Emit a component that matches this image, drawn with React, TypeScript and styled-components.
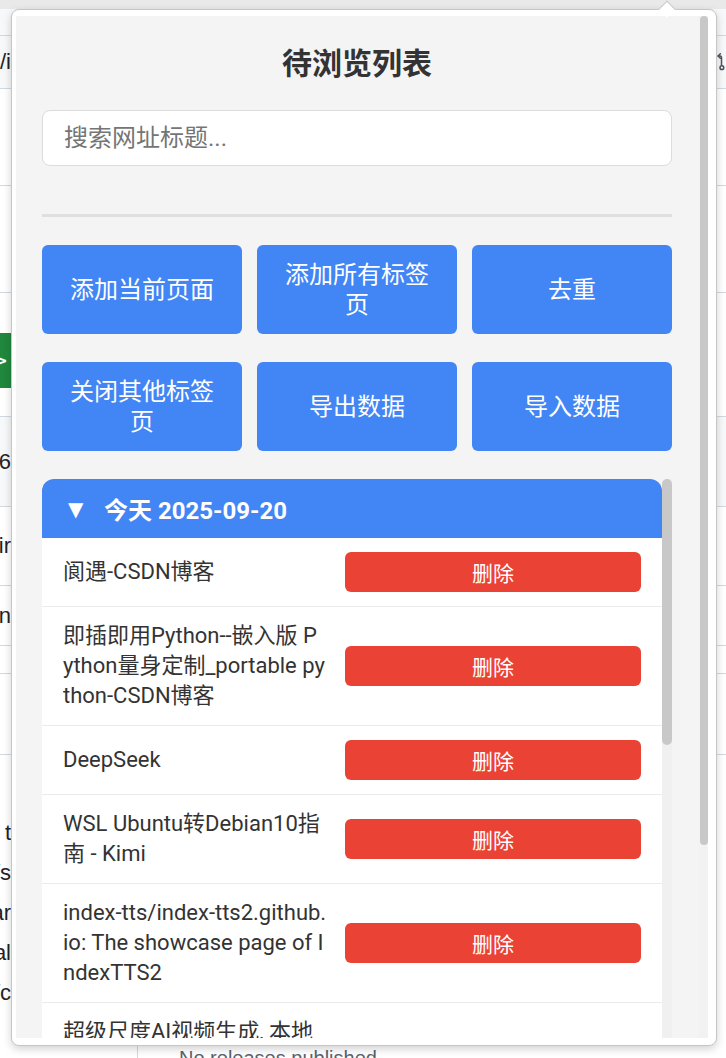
import React from "react";
import styled, { createGlobalStyle } from "styled-components";

const GlobalStyle = createGlobalStyle`
  *, *::before, *::after { box-sizing: border-box; }
  html, body { margin: 0; padding: 0; }
  body {
    background: #ffffff;
    font-family: Roboto, "Noto Sans CJK SC", sans-serif;
    overflow: hidden;
  }
`;

const Screen = styled.div`
  position: relative;
  width: 726px;
  height: 1058px;
  overflow: hidden;
  background: #ffffff;
`;

/* ---------- background web page (only its edges show) ---------- */
const BgPage = styled.div`
  display: flex;
  flex-direction: column;
  width: 100%;
  height: 100%;
`;

const Band = styled.div<{ $h: number; $bg?: string; $line?: boolean }>`
  flex: 0 0 ${(p) => p.$h}px;
  display: flex;
  align-items: stretch;
  justify-content: space-between;
  background: ${(p) => p.$bg ?? "#ffffff"};
  border-bottom: ${(p) => (p.$line ? "1px solid #d1d9e0" : "0")};
`;

const EdgeText = styled.div`
  width: 11px;
  display: flex;
  align-items: center;
  justify-content: flex-end;
  overflow: hidden;
  white-space: nowrap;
  font-family: "Liberation Sans", Arial, sans-serif;
  font-size: 22px;
  color: #1f2328;
`;

const GreenTab = styled.div`
  width: 11px;
  display: flex;
  align-items: center;
  overflow: hidden;
  background: #1f883d;
  color: #ffffff;
  font-family: "DejaVu Sans", sans-serif;
  font-weight: 700;
  font-size: 15px;
  span { margin-left: -5px; }
`;

const EdgeIcon = styled.div`
  width: 9px;
  display: flex;
  align-items: center;
  overflow: hidden;
`;

const ParaBand = styled.div`
  flex: 0 0 290px;
  display: flex;
  flex-direction: column;
  padding-top: 58px;
`;

const ParaLine = styled(EdgeText)`
  height: 40px;
  flex: 0 0 40px;
`;

const FootBand = styled.div`
  flex: 0 0 13px;
  display: flex;
`;

const FootSide = styled.div`
  width: 138px;
  border-right: 1px solid #d1d9e0;
`;

const FootText = styled.div`
  padding: 3px 0 0 41px;
  font-family: "Liberation Sans", Arial, sans-serif;
  font-size: 20px;
  line-height: 20px;
  color: #59636e;
  white-space: nowrap;
`;

/* ---------- extension popup ---------- */
const Popup = styled.div`
  position: absolute;
  left: 11px;
  top: 9px;
  width: 706px;
  height: 1037px;
  display: flex;
  padding: 6px 8px 7px 4px;
  background: #ffffff;
  border: 1px solid #c6c6c6;
  border-radius: 8px;
  box-shadow: 0 3px 8px rgba(0, 0, 0, 0.18);
`;

const Arrow = styled.div`
  position: absolute;
  left: 661px;
  top: 3px;
  width: 12px;
  height: 12px;
  background: #ffffff;
  border-left: 1px solid #c6c6c6;
  border-top: 1px solid #c6c6c6;
  transform: rotate(45deg);
`;

const Viewport = styled.div`
  flex: 1;
  display: flex;
  min-width: 0;
  background: #f4f4f4;
  overflow: hidden;
`;

const Main = styled.main`
  flex: 1;
  min-width: 0;
  padding: 24px 27px 0 26px;
  overflow: hidden;
`;

const ScrollTrack = styled.div<{ $w: number; $bg: string }>`
  flex: 0 0 ${(p) => p.$w}px;
  display: flex;
  justify-content: flex-end;
  align-items: flex-start;
  background: ${(p) => p.$bg};
`;

const ScrollThumb = styled.div<{ $w: number; $h: number }>`
  width: ${(p) => p.$w}px;
  height: ${(p) => p.$h}px;
  border-radius: ${(p) => p.$w / 2}px;
  background: #c8c8c8;
`;

const Title = styled.h1`
  margin: 0;
  font-size: 30px;
  line-height: 48px;
  font-weight: 700;
  text-align: center;
  color: #333333;
`;

const SearchInput = styled.input`
  display: block;
  width: 100%;
  height: 56px;
  margin-top: 22px;
  padding: 0 21px;
  border: 1px solid #dcdcdc;
  border-radius: 8px;
  background: #ffffff;
  font-family: inherit;
  font-size: 24px;
  color: #333333;
  outline: none;
  &::placeholder {
    color: #757575;
  }
`;

const Divider = styled.hr`
  margin: 48px 0 0;
  border: 0;
  height: 3px;
  background: #dfdfdf;
`;

const ActionGrid = styled.div`
  display: grid;
  grid-template-columns: repeat(3, 1fr);
  column-gap: 15px;
  row-gap: 28px;
  margin-top: 28px;
`;

const ActionButton = styled.button`
  min-height: 89px;
  padding: 0 20px;
  border: 0;
  border-radius: 6px;
  background: #4285f4;
  color: #ffffff;
  font-family: inherit;
  font-size: 24px;
  line-height: 30px;
  cursor: pointer;
`;

const ListSection = styled.section`
  display: flex;
  margin-top: 28px;
`;

const ListBody = styled.div`
  flex: 1;
  min-width: 0;
`;

const GroupHeader = styled.div`
  height: 59px;
  display: flex;
  align-items: center;
  padding-left: 26px;
  background: #4285f4;
  color: #ffffff;
  border-radius: 12px 12px 0 0;
  font-weight: 700;
  font-size: 24px;
`;

const Caret = styled.span`
  width: 36px;
  font-family: "DejaVu Sans", sans-serif;
  font-size: 20px;
  font-weight: 400;
`;

const Item = styled.div`
  display: flex;
  align-items: center;
  padding: 14px 21px;
  background: #ffffff;
  border-bottom: 1px solid #ebebeb;
`;

const ItemTitle = styled.div`
  flex: 0 0 270px;
  margin-right: 12px;
  font-size: 22px;
  line-height: 30px;
  color: #333333;
  white-space: pre;
  overflow: hidden;
`;

const DeleteButton = styled.button`
  flex: 1;
  height: 40px;
  border: 0;
  border-radius: 6px;
  background: #ea4335;
  color: #ffffff;
  font-family: inherit;
  font-size: 21px;
  cursor: pointer;
`;

const actions = [
  "添加当前页面",
  "添加所有标签页",
  "去重",
  "关闭其他标签页",
  "导出数据",
  "导入数据",
];

const items = [
  "阆遇-CSDN博客",
  "即插即用Python--嵌入版 P\nython量身定制_portable py\nthon-CSDN博客",
  "DeepSeek",
  "WSL Ubuntu转Debian10指\n南 - Kimi",
  "index-tts/index-tts2.github.\nio: The showcase page of I\nndexTTS2",
  "超级尺度AI视频生成, 本地\n部署一键整合包下载-CSD\nN博客",
];

const paraEnds = ["t", "/s", "ar", "al", "/c"];

const ForkGlyph = () => (
  <svg width="12" height="26" viewBox="0 0 12 26" fill="none">
    <path d="M4.5 2 L1.5 5 L4.5 8" stroke="#4b535c" strokeWidth="2" strokeLinecap="round" strokeLinejoin="round" />
    <path d="M1.5 5 H4 Q6 5 6 7 V17" stroke="#4b535c" strokeWidth="2" strokeLinecap="round" />
    <circle cx="6.5" cy="20.5" r="2.5" stroke="#4b535c" strokeWidth="2" />
  </svg>
);

export default function App() {
  return (
    <Screen>
      <GlobalStyle />
      <BgPage>
        <Band $h={9} $bg="#e9e9e9" />
        <Band $h={27} $bg="#f6f8fa" $line />
        <Band $h={53} $bg="#f6f8fa" $line>
          <EdgeText>/i</EdgeText>
          <EdgeIcon>
            <ForkGlyph />
          </EdgeIcon>
        </Band>
        <Band $h={97} $line />
        <Band $h={107} $line />
        <Band $h={40} />
        <Band $h={55}>
          <GreenTab>
            <span>&gt;</span>
          </GreenTab>
        </Band>
        <Band $h={29} $line />
        <Band $h={90} $bg="#f6f8fa" $line>
          <EdgeText>6</EdgeText>
        </Band>
        <Band $h={79} $line>
          <EdgeText>ir</EdgeText>
        </Band>
        <Band $h={60} $line>
          <EdgeText>n</EdgeText>
        </Band>
        <Band $h={28} $line />
        <Band $h={81} $line />
        <ParaBand>
          {paraEnds.map((t) => (
            <ParaLine key={t}>{t}</ParaLine>
          ))}
        </ParaBand>
        <FootBand>
          <FootSide />
          <FootText>No releases published</FootText>
        </FootBand>
      </BgPage>

      <Popup>
        <Viewport>
          <Main>
            <Title>待浏览列表</Title>
            <SearchInput placeholder="搜索网址标题..." />
            <Divider />
            <ActionGrid>
              {actions.map((a) => (
                <ActionButton key={a}>{a}</ActionButton>
              ))}
            </ActionGrid>
            <ListSection>
              <ListBody>
                <GroupHeader>
                  <Caret>▼</Caret>今天 2025-09-20
                </GroupHeader>
                {items.map((t) => (
                  <Item key={t}>
                    <ItemTitle>{t}</ItemTitle>
                    <DeleteButton>删除</DeleteButton>
                  </Item>
                ))}
              </ListBody>
              <ScrollTrack $w={10} $bg="#f0f0f0">
                <ScrollThumb $w={10} $h={266} />
              </ScrollTrack>
            </ListSection>
          </Main>
          <ScrollTrack $w={9} $bg="#f2f2f2">
            <ScrollThumb $w={8} $h={829} />
          </ScrollTrack>
        </Viewport>
      </Popup>
      <Arrow />
    </Screen>
  );
}
